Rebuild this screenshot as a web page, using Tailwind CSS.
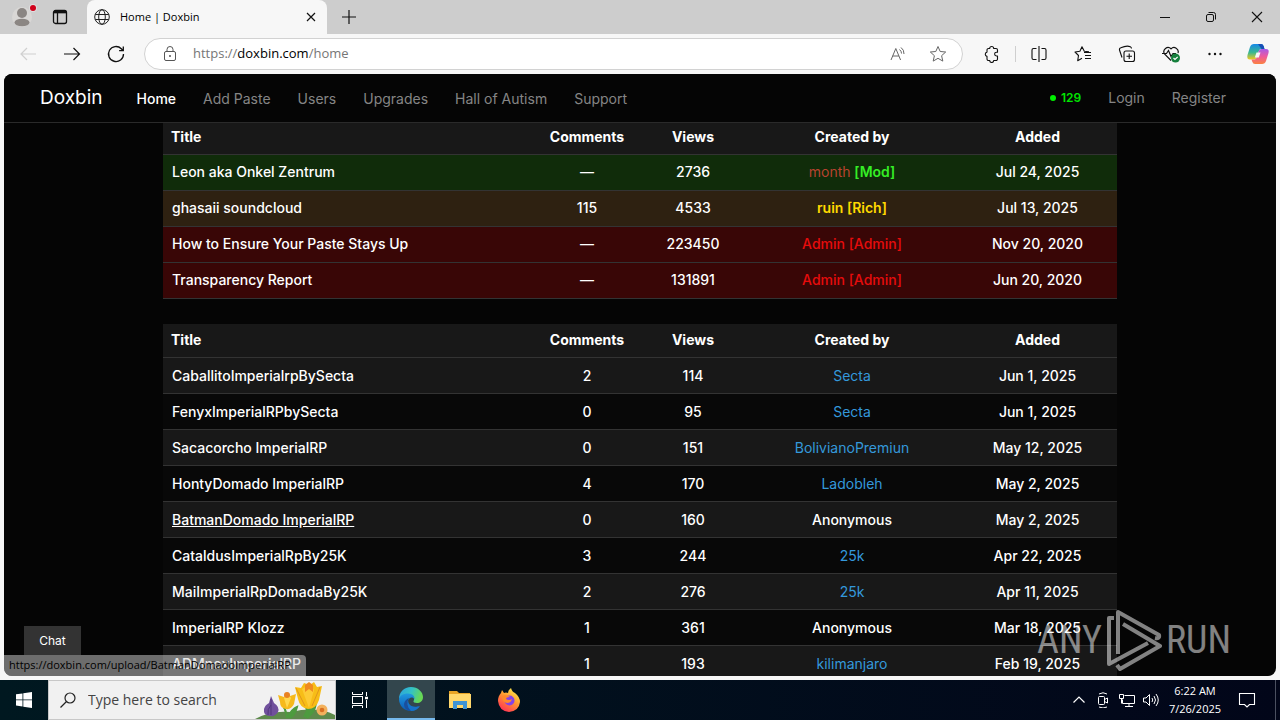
<!DOCTYPE html>
<html lang="en">

<head>
  <meta charset="UTF-8">
  <meta name="viewport" content="width=device-width, initial-scale=1.0">
  <title>Home | Doxbin</title>
  <script src="https://cdn.jsdelivr.net/npm/@tailwindcss/browser@4"></script>
</head>

<body class="flex h-screen flex-col overflow-hidden bg-[#f7f7f7] font-['Open_Sans','Noto_Sans',sans-serif] text-black">
  <!-- Tab strip -->
  <header class="flex h-[34px] shrink-0 items-center bg-[#cdcdcd]">
    <div class="flex h-full w-[87px] items-center gap-6 rounded-br-lg pl-3">
      <button aria-label="Profile" class="relative">
        <svg class="h-5 w-5" viewBox="0 0 20 20"><circle cx="10" cy="10" r="10" fill="#d9d7d5"/><circle cx="10" cy="6" r="5" fill="#8b8683"/><ellipse cx="10" cy="15.500" rx="7.500" ry="3.800" fill="#8b8683"/></svg>
        <span class="absolute -top-0.5 -right-1 h-1.5 w-1.5 rounded-full bg-[#d0021b] ring-1 ring-[#dedede]"></span>
      </button>
      <button aria-label="Tab actions" class="-ml-1">
        <svg class="h-4 w-4" viewBox="0 0 16 16" fill="none" stroke="#111" stroke-width="1.3"><rect x="1.500" y="1.500" width="13" height="13" rx="2"/><path d="M1.500 3.500h13M5.500 4v10" /><path d="M2 2.800h12" stroke-width="2.600"/></svg>
      </button>
    </div>
    <div class="flex h-full w-60 items-center rounded-t-lg bg-[#f7f7f7] pr-2 pl-[7px]">
      <svg class="h-4 w-4" viewBox="0 0 16 16" fill="none" stroke="#222"><circle cx="8" cy="8" r="7.300"/><ellipse cx="8" cy="8" rx="3.300" ry="7.300"/><path d="M1.300 5.500h13.400M1.300 10.500h13.400"/></svg>
      <span class="ml-2.5 flex-1 text-[11px]">Home | Doxbin</span>
      <button aria-label="Close tab">
        <svg class="h-4 w-4" viewBox="0 0 16 16" stroke="#111" stroke-width="1.2"><path d="M4 4l8 8M12 4l-8 8"/></svg>
      </button>
    </div>
    <button aria-label="New tab" class="ml-3.5">
      <svg class="h-4 w-4" viewBox="0 0 16 16" stroke="#111" stroke-width="1.2"><path d="M8 1v14M1 8h14"/></svg>
    </button>
    <div class="ml-auto flex items-center gap-[30px] pr-[15px]">
      <button aria-label="Minimize"><svg class="h-4 w-4" viewBox="0 0 16 16" stroke="#111"><path d="M3 8.500h10"/></svg></button>
      <button aria-label="Restore"><svg class="h-4 w-4" viewBox="0 0 16 16" fill="none" stroke="#111"><rect x="3.500" y="5.500" width="7" height="7" rx="1.500"/><path d="M5.500 3.500h5a2 2 0 0 1 2 2v5"/></svg></button>
      <button aria-label="Close"><svg class="h-4 w-4" viewBox="0 0 16 16" stroke="#111" stroke-width="1.100"><path d="M3 3l10 10M13 3l-10 10"/></svg></button>
    </div>
  </header>

  <!-- Address bar -->
  <div class="flex h-10 shrink-0 items-center pr-2.5 pl-[18px]">
    <div class="flex gap-6">
      <button aria-label="Back"><svg class="h-5 w-5" viewBox="0 0 20 20" fill="none" stroke="#d0d0d0" stroke-width="1.200"><path d="M18 10H3M9 4l-6 6 6 6"/></svg></button>
      <button aria-label="Forward"><svg class="h-5 w-5" viewBox="0 0 20 20" fill="none" stroke="#111" stroke-width="1.200"><path d="M2 10h15.500M11.500 4l6 6-6 6"/></svg></button>
      <button aria-label="Refresh"><svg class="h-5 w-5" viewBox="0 0 20 20" fill="none" stroke="#111" stroke-width="1.300"><path d="M17.500 10a7.500 7.500 0 1 1-2.200-5.300l1.700 1.800M17.300 2.500v4.200h-4.200"/></svg></button>
    </div>
    <div class="ml-[18px] flex h-8 flex-1 items-center rounded-full border border-[#d2d2d2] bg-white pr-[15px] pl-4">
      <svg class="h-[18px] w-[18px]" viewBox="0 0 18 18" fill="none" stroke="#555"><rect x="3.500" y="6.500" width="11" height="9" rx="1.500"/><path d="M6 6.500V4.500a3 3 0 0 1 6 0v2"/><circle cx="9" cy="11" r=".6" fill="#555"/></svg>
      <a href="#" class="ml-3.5 flex-1 text-[13px] text-[#767676]">https://<span class="text-black">doxbin.com</span>/home</a>
      <button aria-label="Read aloud" class="mr-5.5"><svg class="h-[18px] w-[18px]" viewBox="0 0 18 18" fill="none" stroke="#666"><path d="M2 15L6.800 3.500 11.600 15M3.700 11h6.200M10.500 4.500q2 1.500 2 4M12 2.500q3.200 2.300 3 6.500"/></svg></button>
      <button aria-label="Add to favorites"><svg class="h-[18px] w-[18px]" viewBox="0 0 18 18" fill="none" stroke="#666" stroke-linejoin="round"><path d="M9 1.500l2.200 5 5.500.5-4.100 3.700 1.200 5.400L9 13.300l-4.800 2.800 1.200-5.400L1.300 7l5.500-.5z"/></svg></button>
    </div>
    <div class="ml-5 flex items-center gap-[26px]">
      <div class="flex items-center gap-3.5">
        <button aria-label="Extensions"><svg class="h-[18px] w-[18px]" viewBox="0 0 18 18" fill="none" stroke="#111" stroke-width="1.100" stroke-linejoin="round"><path d="M5.500 3.500h1.200a2 2 0 0 1 4 0H13a1.500 1.500 0 0 1 1.500 1.500v2.200h-1a1.800 1.800 0 0 0 0 3.800h1v3a1.500 1.500 0 0 1-1.500 1.500h-2.300a2 2 0 0 1-4 0H5.500A1.500 1.500 0 0 1 4 14v-2.600a2.200 2.200 0 0 1 0-4.300V5a1.500 1.500 0 0 1 1.500-1.500z"/></svg></button>
        <span class="h-4 w-px bg-[#cfcfcf]"></span>
      </div>
      <div class="-ml-3 flex items-center gap-[26px]">
        <button aria-label="Split screen"><svg class="h-[18px] w-[18px]" viewBox="0 0 18 18" fill="none" stroke="#111" stroke-width="1.100"><path d="M9 1v16M6.500 3.500h-3a1.500 1.500 0 0 0-1.500 1.500v8a1.500 1.500 0 0 0 1.500 1.500h3M11.500 3.500h3a1.500 1.500 0 0 1 1.500 1.500v8a1.500 1.500 0 0 1-1.500 1.500h-3"/></svg></button>
        <button aria-label="Favorites"><svg class="h-[18px] w-[18px]" viewBox="0 0 18 18" fill="none" stroke="#111" stroke-width="1.100" stroke-linejoin="round"><path d="M15 6.800L10.300 6.300 8 1.800 5.900 6.300 1 7l3.500 3.500-.8 5.200L8 13.300M10 7.500h7M11 10.500h6M11 13.500h6"/></svg></button>
        <button aria-label="Collections"><svg class="h-[18px] w-[18px]" viewBox="0 0 18 18" fill="none" stroke="#111" stroke-width="1.100"><rect x="6" y="6" width="10.500" height="10.500" rx="2"/><path d="M11.200 8.500v5.500M8.500 11.200H14M4 12.500L1.500 5a2 2 0 0 1 1.300-2.300q6-2.500 9.500-1a2 2 0 0 1 1.200 1.800"/></svg></button>
        <button aria-label="Browser essentials"><svg class="h-[18px] w-[18px]" viewBox="0 0 18 18" fill="none" stroke="#111" stroke-width="1.200"><path d="M9 15.500L2.500 9A4.200 4.200 0 0 1 9 3.800 4.200 4.200 0 0 1 16 8M0 8.500h4.500l2-3 2.500 6 2-3h3"/><circle cx="13.500" cy="13" r="4.500" fill="#15803d" stroke="none"/><path d="M11.500 13l1.500 1.500 2.700-2.700" stroke="#fff"/></svg></button>
        <button aria-label="Settings and more"><svg class="h-[18px] w-[18px]" viewBox="0 0 18 18" fill="#111"><circle cx="3.500" cy="9" r="1.200"/><circle cx="9" cy="9" r="1.200"/><circle cx="14.500" cy="9" r="1.200"/></svg></button>
      </div>
      <button aria-label="Copilot" class="-ml-1">
        <svg class="h-6 w-6" viewBox="0 0 24 24">
          <defs>
            <linearGradient id="coA" x1="0" y1="0" x2="0" y2="1"><stop offset="0" stop-color="#1588e8"/><stop offset=".55" stop-color="#3bb890"/><stop offset="1" stop-color="#f4c81e"/></linearGradient>
            <linearGradient id="coB" x1="0" y1="0" x2="0" y2="1"><stop offset="0" stop-color="#a85be8"/><stop offset=".5" stop-color="#ee5a9c"/><stop offset="1" stop-color="#fb8240"/></linearGradient>
          </defs>
          <path d="M8 2h7q2 0 2.700 2.300L18.500 7h-3q-2 0-2.700 2l-2 6q-.8 2.500-3 2.500H4Q.5 17.500 1.500 13L4 5q1-3 4-3z" fill="url(#coA)"/>
          <path d="M16 22H9q-2 0-2.700-2.300L5.500 17.500h2.700q2 0 2.600-2.500l2-6q.7-2 2.700-2H20q3.500 0 2.500 4L20 19q-1 3-4 3z" fill="url(#coB)"/>
          <path d="M12 2h3q2 0 2.700 2.300L18.500 7h-3z" fill="#174eb5"/>
          <path d="M10.500 10.500h4l-1.700 5h-4z" fill="#f7f7f7"/>
        </svg>
      </button>
    </div>
  </div>

  <!-- Web page -->
  <div class="relative mx-1 mb-1 flex min-h-0 flex-1 flex-col overflow-hidden rounded-lg bg-[#050505] font-['Inter',sans-serif] text-white">
    <nav class="relative z-10 flex h-[49px] shrink-0 items-center border-b border-[#2a2a2a] bg-[#050505] pr-[50px] pl-9 text-sm text-[#858585]">
      <a href="#" class="mr-[34px] text-[19px] text-white">Doxbin</a>
      <div class="flex flex-1 gap-[27px] pt-0.5">
        <a href="#" class="font-medium text-white">Home</a>
        <a href="#">Add Paste</a>
        <a href="#">Users</a>
        <a href="#">Upgrades</a>
        <a href="#">Hall of Autism</a>
        <a href="#">Support</a>
      </div>
      <div class="flex items-center gap-[27px]">
        <span class="flex items-center gap-[5px] text-xs font-semibold text-[#00e600]"><span class="h-1.5 w-1.5 rounded-full bg-[#00f000]"></span>129</span>
        <a href="#">Login</a>
        <a href="#">Register</a>
      </div>
    </nav>

    <!-- Scrolled slightly under the nav -->
    <main class="mx-auto -mt-[3px] flex min-h-0 w-3/4 flex-1 flex-col gap-[25px] text-sm font-medium">
      <table class="w-full table-fixed border-collapse text-center">
        <thead>
          <tr class="h-[34px] border-b border-[#333] bg-[#181818]">
            <th class="w-7/18 px-2 text-left">Title</th>
            <th class="w-2/18">Comments</th>
            <th class="w-2/18">Views</th>
            <th class="w-4/18">Created by</th>
            <th class="w-3/18">Added</th>
          </tr>
        </thead>
        <tbody id="pinned"></tbody>
      </table>

      <table class="w-full table-fixed border-collapse text-center">
        <thead>
          <tr class="h-[34px] border-b border-[#333] bg-[#181818]">
            <th class="w-7/18 px-2 text-left">Title</th>
            <th class="w-2/18">Comments</th>
            <th class="w-2/18">Views</th>
            <th class="w-4/18">Created by</th>
            <th class="w-3/18">Added</th>
          </tr>
        </thead>
        <tbody id="pastes"></tbody>
      </table>
    </main>

    <button class="absolute bottom-[21px] left-5 h-[29px] w-[57px] bg-[#333] text-xs">Chat</button>
    <div class="absolute bottom-0 left-0 flex h-[21px] w-[302px] items-center rounded-tr bg-[#d6d6d6]/50 pl-[5px] font-['Open_Sans',sans-serif] text-[11px] whitespace-nowrap text-black">https://doxbin.com/upload/BatmanDomadoImperialRP</div>

    <!-- Watermark -->
    <div class="absolute right-[45px] bottom-1 flex h-16 items-center gap-1 font-['Roboto_Condensed','Liberation_Sans_Narrow','Roboto',sans-serif] text-[38px] text-white/50">
      <span>ANY</span>
      <svg class="h-16 w-14" viewBox="0 0 56 64" fill="none" stroke="#fff" stroke-opacity=".5" stroke-width="4" stroke-linejoin="round"><path d="M8 10H3v46l39-21M12 46V4l41 23q1 4-4 3M17 16l37 22-40 23-3-4"/></svg>
      <span>RUN</span>
    </div>
  </div>

  <!-- Taskbar -->
  <footer class="flex h-10 shrink-0 items-center bg-linear-to-r from-[#001820] to-[#020619] text-white">
    <button aria-label="Start" class="flex h-full w-12 items-center justify-center">
      <svg class="h-4 w-4" viewBox="0 0 16 16" fill="#fff"><path d="M0 2.300L6.500 1.400v6.100H0zM7.300 1.300L16 0v7.500H7.300zM0 8.300h6.500v6.200L0 13.600zM7.300 8.300H16V16l-8.700-1.300z"/></svg>
    </button>
    <label class="flex h-full w-72 items-center border border-[#c8c8c8] bg-[#f1f1f1] pl-[11px] text-[#333]">
      <svg class="h-4 w-4" viewBox="0 0 16 16" fill="none" stroke="#222" stroke-width="1.200"><circle cx="10" cy="6" r="5"/><path d="M6.500 9.500L.5 15.500"/></svg>
      <input type="text" aria-label="Search" placeholder="Type here to search" class="ml-3 w-40 flex-1 bg-transparent text-sm outline-none placeholder:text-[#444]">
      <svg class="h-[38px] w-20" viewBox="0 0 80 38">
        <path d="M0 38q16-9 36-7 26-6 44 3v4z" fill="#5d8a4b"/>
        <path d="M32 37q-1-9-5-14M53 36q-2-10-3-18M49 36q5-12 12-14-1 9-9 15M33 36q4-8 9-10-2 8-7 11" fill="#4d9b3f" stroke="#4d9b3f" stroke-width="2"/>
        <path d="M16 15l3 7q6 4 4 9-3 5-8 4-7 0-6-7 1-4 5-6z" fill="#70509c"/>
        <path d="M16 18v16M16 24q-4 4-3 10" stroke="#50377d" fill="none"/>
        <path d="M23 14l6 2 3-4 3 3 6-2-2 10q-3 6-8 5-6-1-6-7z" fill="#f6b91c"/>
        <path d="M29 17l3 10 4-10-3-5z" fill="#ffd84f"/><circle cx="32" cy="14" r="3" fill="#e98221"/>
        <path d="M40 6l6 1 3-5 6 2 4-3 3 5 5-1-3 14q-3 9-11 9-8-1-10-10z" fill="#f7bd17"/>
        <path d="M47 8l7 19 5-18-5-5z" fill="#fdcb35"/><path d="M50 4l4-3 4 3v7l-4-3-4 3z" fill="#ef8a20"/>
        <path d="M41 7l9 18M65 6l-8 19" stroke="#e1951c" fill="none"/>
        <circle cx="67" cy="29" r="5.500" fill="#f3b15d"/><circle cx="67" cy="29" r="2.300" fill="#d96f20"/>
      </svg>
    </label>
    <button aria-label="Task view" class="flex h-full w-[51px] items-center justify-center pr-1">
      <svg class="h-[18px] w-[18px]" viewBox="0 0 18 18" fill="none" stroke="#fff"><path d="M1.500 1v2.500h10V1M1.500 17v-2.500h10V17M15.500 1v4M15.500 9v8"/><rect x="1.500" y="5.500" width="10" height="7"/><path d="M14 7h3" stroke-width="2.500"/></svg>
    </button>
    <button aria-label="Microsoft Edge" class="flex h-full w-12 items-center justify-center border-b-2 border-[#76b9ed] bg-[#33464d]">
      <svg class="h-6 w-6" viewBox="0 0 24 24">
        <defs>
          <linearGradient id="edA" x1="0" y1="0" x2="1" y2=".3"><stop offset="0" stop-color="#2b9fe0"/><stop offset=".55" stop-color="#34c2c4"/><stop offset="1" stop-color="#67d855"/></linearGradient>
          <linearGradient id="edB" x1="0" y1="0" x2="0" y2="1"><stop offset="0" stop-color="#2099e0"/><stop offset="1" stop-color="#0a59b5"/></linearGradient>
        </defs>
        <path d="M0 12C0 5 5 0 12 0s12 5 12 10c0 4-3 6-6 6-2.500 0-4-1-3.500-2 1.500-2 .5-6-4.500-6-5 0-9 2-10 4z" fill="url(#edA)"/>
        <path d="M0 12c1-4 5-5.500 9-5.500 4.500 0 7 3 6.500 5.500-2-3-6-1.500-6.500 2-.5 4 4 7.500 11 5-2 3-5 5-8 5C5 24 0 18.500 0 12z" fill="url(#edB)"/>
        <path d="M10 11q-4 6 2 12.900-7-1-7-7 1-4.500 5-5.900z" fill="#1a4f9c"/>
        <path d="M10.500 11q-3 4 1 7.500 4 2.500 9.500.5-3 5-9 5-6-6-1.500-13z" fill="#1672c9"/>
      </svg>
    </button>
    <button aria-label="File Explorer" class="flex h-full w-[50px] items-center justify-center">
      <svg class="h-[22px] w-[22px]" viewBox="0 0 22 22"><path d="M0 2h8l2 2h11v4H0z" fill="#e8a426"/><path d="M0 5h22v14H0z" fill="#ffd76c"/><path d="M4 12h14v8h-4v-4H8v4H4z" fill="#3d93d6"/></svg>
    </button>
    <button aria-label="Firefox" class="flex h-full w-12 items-center justify-center">
      <svg class="h-6 w-6" viewBox="0 0 24 24">
        <defs><linearGradient id="fx" x1=".8" y1="0" x2=".2" y2="1"><stop offset="0" stop-color="#fff44f"/><stop offset=".45" stop-color="#ff9830"/><stop offset="1" stop-color="#ff2a58"/></linearGradient></defs>
        <path d="M14 0q1 4 4 5 5 4 5 9-1 9-11 10Q2 23 1 13q0-5 3-8l1-3 2 3q2-1 4 0 0-3 3-5z" fill="url(#fx)"/>
        <circle cx="12.500" cy="12.500" r="5" fill="#8542e8"/>
        <path d="M5 8q5-2 8 1-4 0-4 2 3 2 6 0-1 4-5 4-5-1-5-7z" fill="#ff8a2b"/>
      </svg>
    </button>
    <div class="ml-auto flex h-full items-center">
      <div class="flex items-center gap-2 pr-1">
        <svg class="h-4 w-4" viewBox="0 0 16 16" fill="none" stroke="#fff" stroke-width="1.200"><path d="M2.500 10.500L8 5l5.500 5.500"/></svg>
        <svg class="h-4 w-4" viewBox="0 0 16 16" fill="none" stroke="#fff"><rect x="3.500" y="4.500" width="6" height="8" rx="1"/><path d="M9.500 7.500l3-1.500v5l-3-1.500M4 2q4-2.500 8 0M4 15q4 2 8 0"/></svg>
        <svg class="h-4 w-4" viewBox="0 0 16 16" fill="none" stroke="#fff"><path d="M5.500 3.500h10v8h-12v-4M6 14.500h8M10 11.500v3M.5 2.500h4v4h-4zM2.500 6.500v5"/></svg>
        <svg class="h-4 w-4" viewBox="0 0 16 16" fill="none" stroke="#fff"><path d="M.5 6h2.500l3.500-3.500v11L3 10H.5zM9 6q1.500 2 0 4M11 4q3 4 0 8M13 2q4.500 6 0 12"/></svg>
      </div>
      <div class="w-16 text-center text-[11px] leading-[18px] whitespace-nowrap">
        <div>6:22 AM</div>
        <div>7/26/2025</div>
      </div>
      <button aria-label="Notifications" class="flex h-full w-10 items-center justify-center">
        <svg class="h-[18px] w-[18px]" viewBox="0 0 18 18" fill="none" stroke="#fff" stroke-width="1.100"><path d="M1.500 2.500h15v11h-5L9 16l-2.500-2.500h-5z"/></svg>
      </button>
      <span class="ml-2 h-full w-[5px] border-l border-[#4b5060]"></span>
    </div>
  </footer>

  <script>
    const pinned = [
      { title: 'Leon aka Onkel Zentrum', comments: '—', views: 2736, user: '<a href="#" class="font-normal text-[#b8432f]">month</a> <b class="font-semibold text-[#35ee25]">[Mod]</b>', added: 'Jul 24, 2025', row: 'bg-[#102c0a]' },
      { title: 'ghasaii soundcloud', comments: 115, views: 4533, user: '<a href="#" class="font-semibold text-[#ffd900]">ruin [Rich]</a>', added: 'Jul 13, 2025', row: 'bg-[#2e2111]' },
      { title: 'How to Ensure Your Paste Stays Up', comments: '—', views: 223450, user: '<a href="#" class="text-[#e60c0c]">Admin [Admin]</a>', added: 'Nov 20, 2020', row: 'bg-[#390606]' },
      { title: 'Transparency Report', comments: '—', views: 131891, user: '<a href="#" class="text-[#e60c0c]">Admin [Admin]</a>', added: 'Jun 20, 2020', row: 'bg-[#390606]' }
    ];

    const pastes = [
      ['CaballitoImperialrpBySecta', 2, 114, 'Secta', 'Jun 1, 2025'],
      ['FenyxImperialRPbySecta', 0, 95, 'Secta', 'Jun 1, 2025'],
      ['Sacacorcho ImperialRP', 0, 151, 'BolivianoPremiun', 'May 12, 2025'],
      ['HontyDomado ImperialRP', 4, 170, 'Ladobleh', 'May 2, 2025'],
      ['BatmanDomado ImperialRP', 0, 160, 'Anonymous', 'May 2, 2025'],
      ['CataldusImperialRpBy25K', 3, 244, '25k', 'Apr 22, 2025'],
      ['MaiImperialRpDomadaBy25K', 2, 276, '25k', 'Apr 11, 2025'],
      ['ImperialRP Klozz', 1, 361, 'Anonymous', 'Mar 18, 2025'],
      ['ADMnoxImperialRP', 1, 193, 'kilimanjaro', 'Feb 19, 2025']
    ].map(([title, comments, views, name, added], i) => ({
      title, comments, views, added,
      user: name === 'Anonymous' ? name : `<a href="#" class="font-normal text-[#3498db]">${name}</a>`,
      row: i % 2 ? 'bg-[#080808]' : 'bg-[#181818]',
      link: title.startsWith('Batman') ? 'underline' : ''
    }));

    // Fill a table body
    function render(id, items) {
      document.getElementById(id).innerHTML = items.map(item => `
        <tr class="h-9 border-b border-[#333] ${item.row}">
          <td class="px-[9px] text-left"><a href="#" class="${item.link ?? ''}">${item.title}</a></td>
          <td>${item.comments}</td>
          <td>${item.views}</td>
          <td>${item.user}</td>
          <td>${item.added}</td>
        </tr>`).join('');
    }

    render('pinned', pinned);
    render('pastes', pastes);
  </script>
</body>

</html>
